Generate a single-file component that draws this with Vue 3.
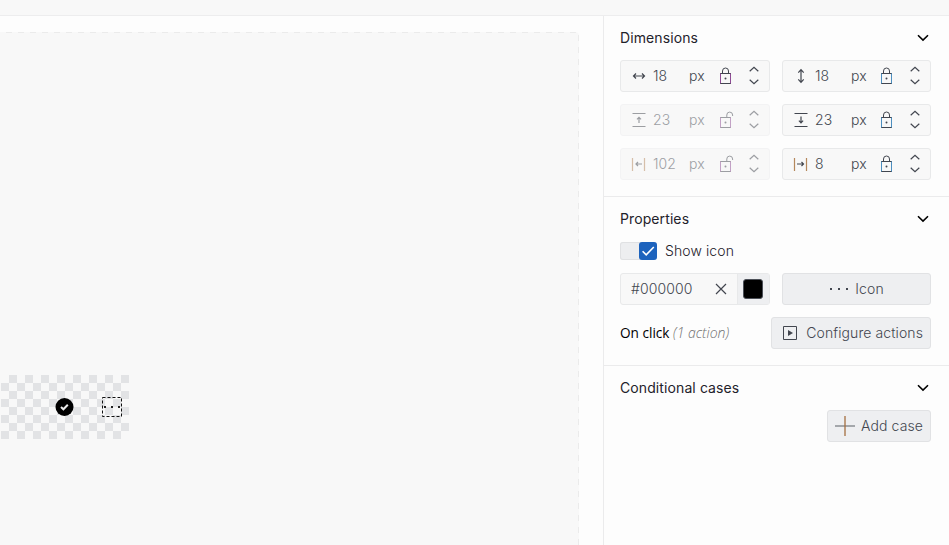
<script setup>
import { reactive, ref } from 'vue'

const fields = reactive([
  { id: 'width', value: '18', locked: true },
  { id: 'height', value: '18', locked: true },
  { id: 'top', value: '23', locked: false },
  { id: 'bottom', value: '23', locked: true },
  { id: 'left', value: '102', locked: false },
  { id: 'right', value: '8', locked: true },
])

const glyphs = {
  width: { lines: 'M2.5 8h11M5 5.5 2.5 8 5 10.5M11 5.5 13.5 8 11 10.5', bars: '' },
  height: { lines: 'M8 2v12M5.3 4.6 8 1.7l2.7 2.9M5.3 11.4 8 14.3l2.7-2.9', bars: '' },
  top: { lines: 'M8 5.5v5.5M6 7.4l2-2 2 2', bars: 'M1.5 1.5h13M1.5 14.5h13' },
  bottom: { lines: 'M8 4.5v6M5.9 8.7 8 10.8l2.1-2.1', bars: 'M1.5 1.5h13M1.5 14.5h13' },
  left: { lines: 'M5 8h6M7 6 5 8l2 2', bars: 'M1.5 2v13M13.5 2v13' },
  right: { lines: 'M4 8h6.5M8.5 6l2 2-2 2', bars: 'M1.5 2v13M13.5 2v13' },
}

const showIcon = ref(true)
const color = ref('#000000')
</script>

<template>
  <div class="editor">
    <header class="topbar"></header>
    <main class="workspace">
      <div class="stage">
        <div class="artboard">
          <div class="node">
            <svg class="node-check" width="20" height="20" viewBox="0 0 20 20">
              <circle cx="10.5" cy="10" r="9" />
              <path d="m7 10 2.4 2.3 4.4-4.5" />
            </svg>
            <div class="node-selected">
              <svg width="20" height="20" viewBox="0 0 20 20">
                <path class="outline" d="M.5.5h19v19H.5z" />
                <path class="dots" d="M2 9h2v2H2zM9 9h2v2H9zM16 9h2v2h-2z" />
              </svg>
            </div>
          </div>
        </div>
      </div>

      <aside class="panel">
        <section class="group">
          <div class="heading">
            <h2>Dimensions</h2>
            <svg class="caret" width="16" height="16" viewBox="0 0 16 16"><path d="m3 5.2 5 4.9 5-4.9" /></svg>
          </div>
          <div class="fields">
            <div v-for="f in fields" :key="f.id" class="field" :class="{ disabled: !f.locked }">
              <svg class="glyph" width="16" height="16" viewBox="0 0 16 16">
                <path :class="{ vertical: f.id === 'left' || f.id === 'right' }" :d="glyphs[f.id].bars" />
                <path :d="glyphs[f.id].lines" />
              </svg>
              <span class="value">{{ f.value }}</span>
              <span class="unit">px</span>
              <svg class="lock" width="16" height="18" viewBox="0 0 16 18">
                <path v-if="f.locked" d="M4.5 6.5V4a3 3 0 0 1 6 0v2.5" />
                <path v-else d="M8.8 6.5V4a2.9 2.9 0 0 1 5.8 0v1" />
                <path d="M2 6.5h11M2 16.5h11" />
                <path class="sides" d="M2.5 6.5v10M12.5 6.5v10" />
                <circle cx="7.5" cy="11.5" r="1" />
              </svg>
              <svg class="stepper" width="12" height="20" viewBox="0 0 12 20">
                <path d="M1.7 5.2 6 1.2l4.3 4M1.7 13.8l4.3 4 4.3-4" />
              </svg>
            </div>
          </div>
        </section>

        <section class="group">
          <div class="heading">
            <h2>Properties</h2>
            <svg class="caret" width="16" height="16" viewBox="0 0 16 16"><path d="m3 5.2 5 4.9 5-4.9" /></svg>
          </div>
          <div class="toggle-row">
            <button class="toggle" role="switch" :aria-checked="showIcon" @click="showIcon = !showIcon">
              <span class="knob">
                <svg width="18" height="18" viewBox="0 0 18 18"><path d="m3.6 9.2 3.6 3.6L14.8 5" /></svg>
              </span>
            </button>
            <span>Show icon</span>
          </div>
          <div class="pair">
            <div class="color-field">
              <span class="hex">{{ color }}</span>
              <svg class="clear" width="12" height="12" viewBox="0 0 12 12"><path d="m1 1 10 10M11 1 1 11" /></svg>
              <span class="swatch-cell"><span class="swatch"></span></span>
            </div>
            <button class="btn icon-btn">
              <svg width="20" height="16" viewBox="0 0 20 16"><path class="solid" d="M1 7h2v2H1zM9 7h2v2H9zM17 7h2v2h-2z" /></svg>
              <span>Icon</span>
            </button>
          </div>
          <div class="event-row">
            <p>On click <em>(1 action)</em></p>
            <button class="btn configure">
              <svg width="16" height="16" viewBox="0 0 16 16">
                <path d="M1.5 1.5h13v13h-13z" />
                <path class="solid" d="M6 5v6l5-3z" />
              </svg>
              <span>Configure actions</span>
            </button>
          </div>
        </section>

        <section class="group">
          <div class="heading">
            <h2>Conditional cases</h2>
            <svg class="caret" width="16" height="16" viewBox="0 0 16 16"><path d="m3 5.2 5 4.9 5-4.9" /></svg>
          </div>
          <div class="end-row">
            <button class="btn add">
              <svg width="20" height="20" viewBox="0 0 20 20">
                <path class="across" d="M0 10h20" />
                <path class="down" d="M10 0v20" />
              </svg>
              <span>Add case</span>
            </button>
          </div>
        </section>
      </aside>
    </main>
  </div>
</template>

<style>
body {
  margin: 0;
  overflow: hidden;
}
</style>

<style scoped>
* {
  box-sizing: border-box;
}
.editor {
  display: flex;
  flex-direction: column;
  height: 100vh;
  background: #fdfdfd;
  color: #42464f;
  font-family: Inter, "Liberation Sans", sans-serif;
  font-size: 14px;
  line-height: 20px;
  letter-spacing: 0.1px;
}
svg {
  display: block;
  flex: none;
  fill: none;
  stroke: currentColor;
}
.topbar {
  flex: none;
  height: 16px;
  background: #f8f8f8;
  border-bottom: 1px solid #ededee;
}
.workspace {
  display: flex;
  flex: 1;
  min-height: 0;
}
.stage {
  flex: 1;
  padding: 16px 24px 0 0;
}
.artboard {
  position: relative;
  height: 100%;
  border-radius: 0 4px 0 0;
  background:
    repeating-linear-gradient(90deg, transparent 0 6px, #ebebeb 6px 12px) 0 0 / 100% 1px no-repeat,
    repeating-linear-gradient(180deg, transparent 0 3px, #ebebeb 3px 9px, transparent 9px 12px) 100% 0 / 1px 100% no-repeat,
    #f8f8f8;
}
.node {
  position: absolute;
  left: 1px;
  top: 343px;
  width: 128px;
  height: 64px;
  background: conic-gradient(#e2e3e5 25%, transparent 0 50%, #e2e3e5 0 75%, transparent 0) 0 0 / 16px 16px;
}
.node-check {
  position: absolute;
  left: 53px;
  top: 22px;
  stroke: none;
  fill: #000;
}
.node-check path {
  fill: none;
  stroke: #ececec;
  stroke-width: 2;
}
.node-selected {
  position: absolute;
  left: 101px;
  top: 22px;
}
.outline {
  stroke: #111;
  stroke-dasharray: 3 2;
}
.dots {
  fill: #222;
  stroke: none;
}
.panel {
  flex: none;
  width: 346px;
  border-left: 1px solid #ebebec;
}
.group {
  display: flex;
  flex-direction: column;
  gap: 12px;
  padding: 12px 18px 16px 16px;
  border-bottom: 1px solid #ebebec;
}
.group:last-child {
  border-bottom: 0;
}
.heading {
  display: flex;
  align-items: center;
  justify-content: space-between;
  color: #1f222b;
}
h2 {
  margin: 0;
  font-size: 14px;
  font-weight: 400;
}
.caret {
  color: #000;
  stroke-width: 1.6;
}
.fields,
.pair {
  display: grid;
  grid-template-columns: 150px 149px;
  gap: 12px;
}
.field {
  display: flex;
  align-items: center;
  height: 32px;
  padding: 0 9px 0 10px;
  border: 1px solid #e8e9ea;
  border-radius: 3px;
  background: #f8f8f8;
}
.field.disabled {
  border-color: #f3f3f4;
}
.disabled > * {
  opacity: 0.5;
}
.glyph {
  stroke-width: 1.2;
}
.vertical {
  stroke: #b5885c;
}
.value {
  flex: 1;
  padding-left: 6px;
  font-weight: 300;
}
.unit {
  width: 28px;
  font-weight: 300;
}
.field:nth-child(odd) .unit {
  width: 29px;
}
.lock .sides {
  stroke: #4d8fc0;
}
.field:first-child .sides,
.disabled .sides {
  stroke: #8e4c94;
}
.lock circle {
  fill: currentColor;
  stroke: none;
}
.stepper {
  margin-left: 14px;
  stroke-width: 1.2;
}
.toggle-row {
  display: flex;
  align-items: center;
  gap: 8px;
  height: 20px;
  font-weight: 300;
  color: #1f222b;
}
.toggle {
  display: flex;
  justify-content: flex-end;
  width: 37px;
  height: 18px;
  padding: 0;
  border: 0;
  border-radius: 3px;
  background: #edeef0;
  box-shadow: inset 0 0 0 1px #e0e1e3;
}
.knob {
  width: 18px;
  height: 18px;
  border-radius: 3px;
  background: #1d63bd;
  color: #fff;
}
.knob svg {
  stroke-width: 1.6;
}
.color-field {
  display: flex;
  align-items: center;
  height: 32px;
  padding-left: 10px;
  border: 1px solid #e8e9ea;
  border-radius: 3px;
  background: #f8f8f8;
}
.hex {
  flex: 1;
  font-weight: 300;
}
.clear {
  margin-right: 10px;
  stroke-width: 1.2;
}
.swatch-cell {
  display: flex;
  align-items: center;
  width: 32px;
  height: 100%;
  padding-left: 5px;
  border-left: 1px solid #e8e9ea;
  background: #eeeff1;
}
.swatch {
  width: 20px;
  height: 20px;
  border: 1px solid #4c5058;
  border-radius: 3px;
  background: #000;
}
.btn {
  display: flex;
  align-items: center;
  justify-content: center;
  height: 32px;
  padding: 0 7px;
  border: 1px solid #e1e2e4;
  border-radius: 3px;
  background: #eeeff1;
  color: inherit;
  font: inherit;
  font-weight: 300;
  letter-spacing: inherit;
}
.icon-btn {
  gap: 6px;
}
.solid {
  fill: currentColor;
  stroke: none;
}
.configure {
  gap: 8px;
  padding-left: 10px;
}
.add {
  gap: 6px;
}
.across {
  stroke: #7c8086;
  stroke-width: 1.3;
}
.down {
  stroke: #a56f40;
  stroke-width: 1.3;
}
.event-row {
  display: flex;
  align-items: center;
  justify-content: space-between;
}
p {
  margin: 0;
  color: #000;
  font-family: "Open Sans", "Noto Sans", sans-serif;
  font-size: 13.6px;
  font-weight: 400;
  letter-spacing: 0;
}
em {
  color: #707070;
  font-size: 14px;
  font-weight: 300;
}
.end-row {
  display: flex;
  justify-content: flex-end;
}
</style>
